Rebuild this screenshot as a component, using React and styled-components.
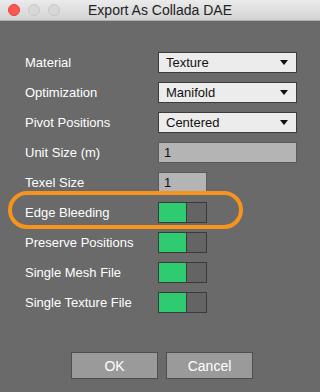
import React from "react";
import styled, { createGlobalStyle } from "styled-components";

const Global = createGlobalStyle`
  html, body {
    margin: 0;
    padding: 0;
    background: #6a6a6a;
  }
  body {
    font-family: "Liberation Sans", Arial, sans-serif;
  }
`;

const Window = styled.div`
  width: 320px;
  height: 392px;
  background: #6a6a6a;
  display: flex;
  flex-direction: column;
  overflow: hidden;
`;

const TitleBar = styled.div`
  height: 20px;
  flex-shrink: 0;
  background: linear-gradient(#ebebeb, #d3d3d3);
  border-bottom: 1px solid #b0b0b0;
  display: flex;
  align-items: center;
  position: relative;
  padding-left: 8px;
  gap: 8px;
`;

const Light = styled.span`
  width: 12px;
  height: 12px;
  border-radius: 50%;
  background: ${(p) => (p.$red ? "#fc5753" : "#d8d8d8")};
  border: 0.5px solid ${(p) => (p.$red ? "#e0443e" : "#c8c8c8")};
  box-sizing: border-box;
`;

const Title = styled.div`
  position: absolute;
  left: 0;
  right: 0;
  text-align: center;
  font-size: 14px;
  color: #222;
  pointer-events: none;
`;

const Form = styled.div`
  display: grid;
  grid-template-columns: 133px auto;
  grid-auto-rows: 21px;
  row-gap: 9px;
  padding: 31px 0 0 25px;
`;

const Label = styled.div`
  color: #fff;
  font-size: 13px;
  display: flex;
  align-items: center;
  position: relative;
`;

const Select = styled.div`
  width: 139px;
  height: 21px;
  box-sizing: border-box;
  background: #ececec;
  border: 1px solid #3c3c3c;
  display: flex;
  align-items: center;
  justify-content: space-between;
  padding: 0 8px 0 7px;
  font-size: 13px;
  color: #111;
`;

const Arrow = styled.span`
  width: 0;
  height: 0;
  border-left: 4px solid transparent;
  border-right: 4px solid transparent;
  border-top: 5px solid #111;
`;

const Field = styled.div`
  width: ${(p) => p.$w}px;
  height: 21px;
  box-sizing: border-box;
  background: #b4b4b4;
  border: 1px solid #5a5a5a;
  display: flex;
  align-items: center;
  padding-left: 5px;
  font-size: 13px;
  color: #111;
`;

const Toggle = styled.div`
  width: 49px;
  height: 21px;
  box-sizing: border-box;
  border: 1px solid #3a3a3a;
  display: flex;
`;

const ToggleOn = styled.span`
  width: 27px;
  background: #2fcb70;
  border-right: 1px solid #3a3a3a;
`;

const ToggleOff = styled.span`
  flex: 1;
  background: #646464;
`;

const Ring = styled.div`
  position: absolute;
  left: -17px;
  top: -11px;
  width: 235px;
  height: 38px;
  box-sizing: border-box;
  border: 4px solid #f7941d;
  border-radius: 19px;
  pointer-events: none;
`;

const Buttons = styled.div`
  display: flex;
  justify-content: center;
  gap: 8px;
  margin-top: 39px;
  padding-left: 4px;
`;

const Button = styled.div`
  width: 87px;
  height: 27px;
  box-sizing: border-box;
  background: #9a9a9a;
  border: 1px solid #4e4e4e;
  color: #fff;
  font-size: 14px;
  display: flex;
  align-items: center;
  justify-content: center;
`;

const selects = [
  ["Material", "Texture"],
  ["Optimization", "Manifold"],
  ["Pivot Positions", "Centered"],
];

const toggles = [
  "Edge Bleeding",
  "Preserve Positions",
  "Single Mesh File",
  "Single Texture File",
];

export default function App() {
  return (
    <>
      <Global />
      <Window>
        <TitleBar>
          <Light $red />
          <Light />
          <Light />
          <Title>Export As Collada DAE</Title>
        </TitleBar>
        <Form>
          {selects.map(([label, value]) => (
            <React.Fragment key={label}>
              <Label>{label}</Label>
              <Select>
                {value}
                <Arrow />
              </Select>
            </React.Fragment>
          ))}
          <Label>Unit Size (m)</Label>
          <Field $w={139}>1</Field>
          <Label>Texel Size</Label>
          <Field $w={49}>1</Field>
          {toggles.map((label, i) => (
            <React.Fragment key={label}>
              <Label>
                {label}
                {i === 0 && <Ring />}
              </Label>
              <Toggle>
                <ToggleOn />
                <ToggleOff />
              </Toggle>
            </React.Fragment>
          ))}
        </Form>
        <Buttons>
          <Button>OK</Button>
          <Button>Cancel</Button>
        </Buttons>
      </Window>
    </>
  );
}
